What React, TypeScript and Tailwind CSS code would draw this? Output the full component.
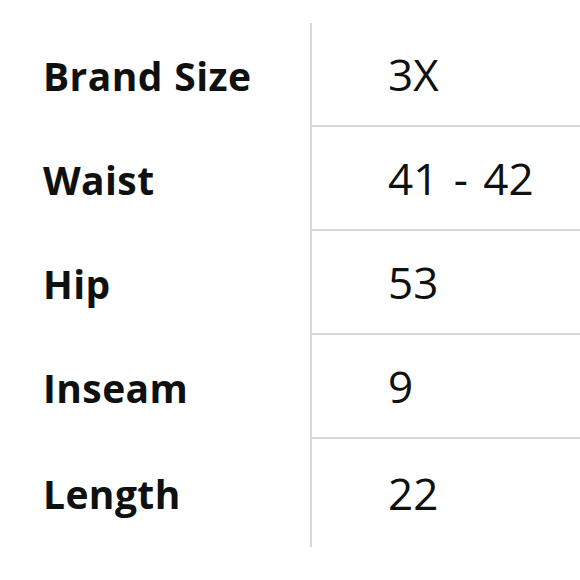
import React from 'react';

const rows = [
  { label: 'Brand Size', value: '3X' },
  { label: 'Waist', value: '41 - 42' },
  { label: 'Hip', value: '53' },
  { label: 'Inseam', value: '9' },
  { label: 'Length', value: '22' },
];

export default function App() {
  return (
    <div className="w-[580px] h-[580px] bg-white pt-[23px] text-[#0f1111]" style={{ fontFamily: '"Open Sans", "Noto Sans", sans-serif' }}>
      {rows.map((row, i) => (
        <div key={row.label} className={`flex ${i === rows.length - 1 ? 'h-[108px]' : 'h-[104px]'}`}>
          <div className="w-[310px] shrink-0 flex items-center pl-[43px] text-[39px] font-bold leading-none tracking-[0.4px] [word-spacing:1px]">
            {row.label}
          </div>
          <div
            className={`flex-1 flex items-center pl-[76px] text-[44px] leading-none [word-spacing:4px] border-l-2 border-[#d5d9d9] ${
              i === rows.length - 1 ? '' : 'border-b-2'
            }`}
          >
            {row.value}
          </div>
        </div>
      ))}
    </div>
  );
}
